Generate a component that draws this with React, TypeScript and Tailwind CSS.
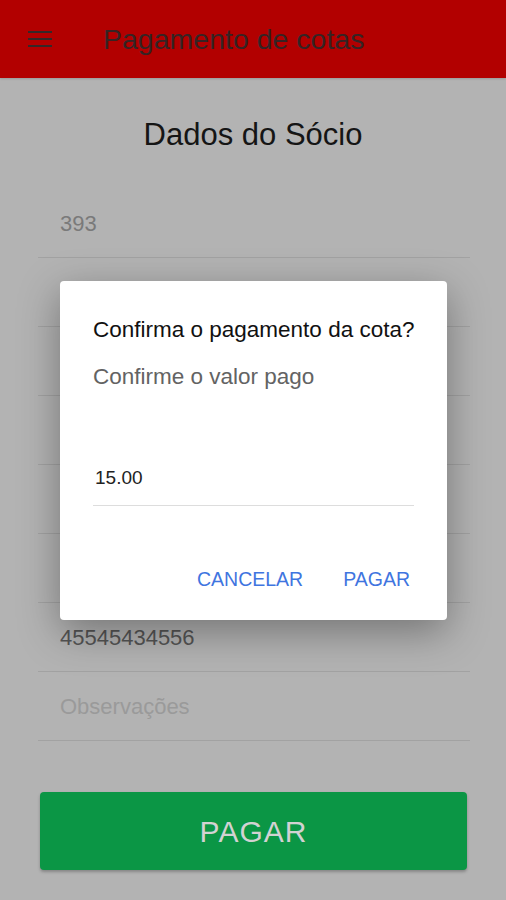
import { useState } from "react";

const font = { fontFamily: "'Liberation Sans', Arial, sans-serif" };

// values behind the dialog are not visible in the screen, keep them blank
const rows = [
  { value: "393", tone: "text-[#7a7a7a]" },
  { value: "", tone: "" },
  { value: "", tone: "" },
  { value: "", tone: "" },
  { value: "", tone: "" },
  { value: "", tone: "" },
  { value: "45545434556", tone: "text-[#555555]" },
  { value: "Observações", tone: "text-[#9a9a9a]" },
];

const App = () => {
  const [valor, setValor] = useState("15.00");

  return (
    <div className="relative min-h-[900px] w-full overflow-hidden bg-[#b3b3b3]" style={font}>
      {/* Toolbar (dimmed by the dialog backdrop) */}
      <header className="flex h-[78px] items-center bg-[#b20000] shadow-[0_1px_2px_rgba(0,0,0,0.15)]">
        <div className="ml-[28px] flex w-[24px] flex-col gap-[5px]">
          <span className="block h-[2px] w-full bg-[#352828]" />
          <span className="block h-[2px] w-full bg-[#352828]" />
          <span className="block h-[2px] w-full bg-[#352828]" />
        </div>
        <h1 className="ml-[51px] text-[28.5px] leading-none text-[#352424]">Pagamento de cotas</h1>
      </header>

      <main className="flex flex-col">
        <h2 className="pt-[39px] pb-[36px] text-center text-[31px] leading-[36px] text-[#151515]">
          Dados do Sócio
        </h2>

        <div className="ml-[38px] mr-[36px] flex flex-col">
          {rows.map((row, i) => (
            <div key={i} className="flex h-[69px] items-center border-b border-[#a2a2a2] pl-[22px]">
              <span className={`text-[22px] ${row.tone}`}>{row.value}</span>
            </div>
          ))}
        </div>

        <div className="mt-[51px] ml-[40px] mr-[39px]">
          <button
            className="flex h-[78px] w-full items-center justify-center rounded-[4px] bg-[#0b9645] text-[30px] tracking-[1px] text-[#d2d2d2] shadow-[0_2px_3px_rgba(0,0,0,0.25)]"
            style={font}
          >
            PAGAR
          </button>
        </div>
      </main>

      {/* Confirmation dialog */}
      <div className="absolute left-[60px] top-[281px] flex h-[339px] w-[387px] flex-col rounded-[4px] bg-white px-[33px] shadow-[0_12px_40px_rgba(0,0,0,0.35)]">
        <p className="mt-[36px] whitespace-nowrap text-[22.5px] leading-[26px] text-[#111111]">
          Confirma o pagamento da cota?
        </p>
        <p className="mt-[21px] whitespace-nowrap text-[22.5px] leading-[26px] text-[#636363]">
          Confirme o valor pago
        </p>
        <input
          value={valor}
          onChange={(e) => setValor(e.target.value)}
          className="mt-[74px] box-border h-[42px] w-full border-b border-[#dddddd] pb-[14px] pl-[2px] text-[19px] leading-[27px] text-[#222222] outline-none"
          style={font}
        />
        <div className="mt-[61px] flex justify-end gap-[40px] pr-[4px] text-[19.5px] leading-[24px] text-[#3f75e0]">
          <button style={font}>CANCELAR</button>
          <button style={font}>PAGAR</button>
        </div>
      </div>
    </div>
  );
};

export default App;
